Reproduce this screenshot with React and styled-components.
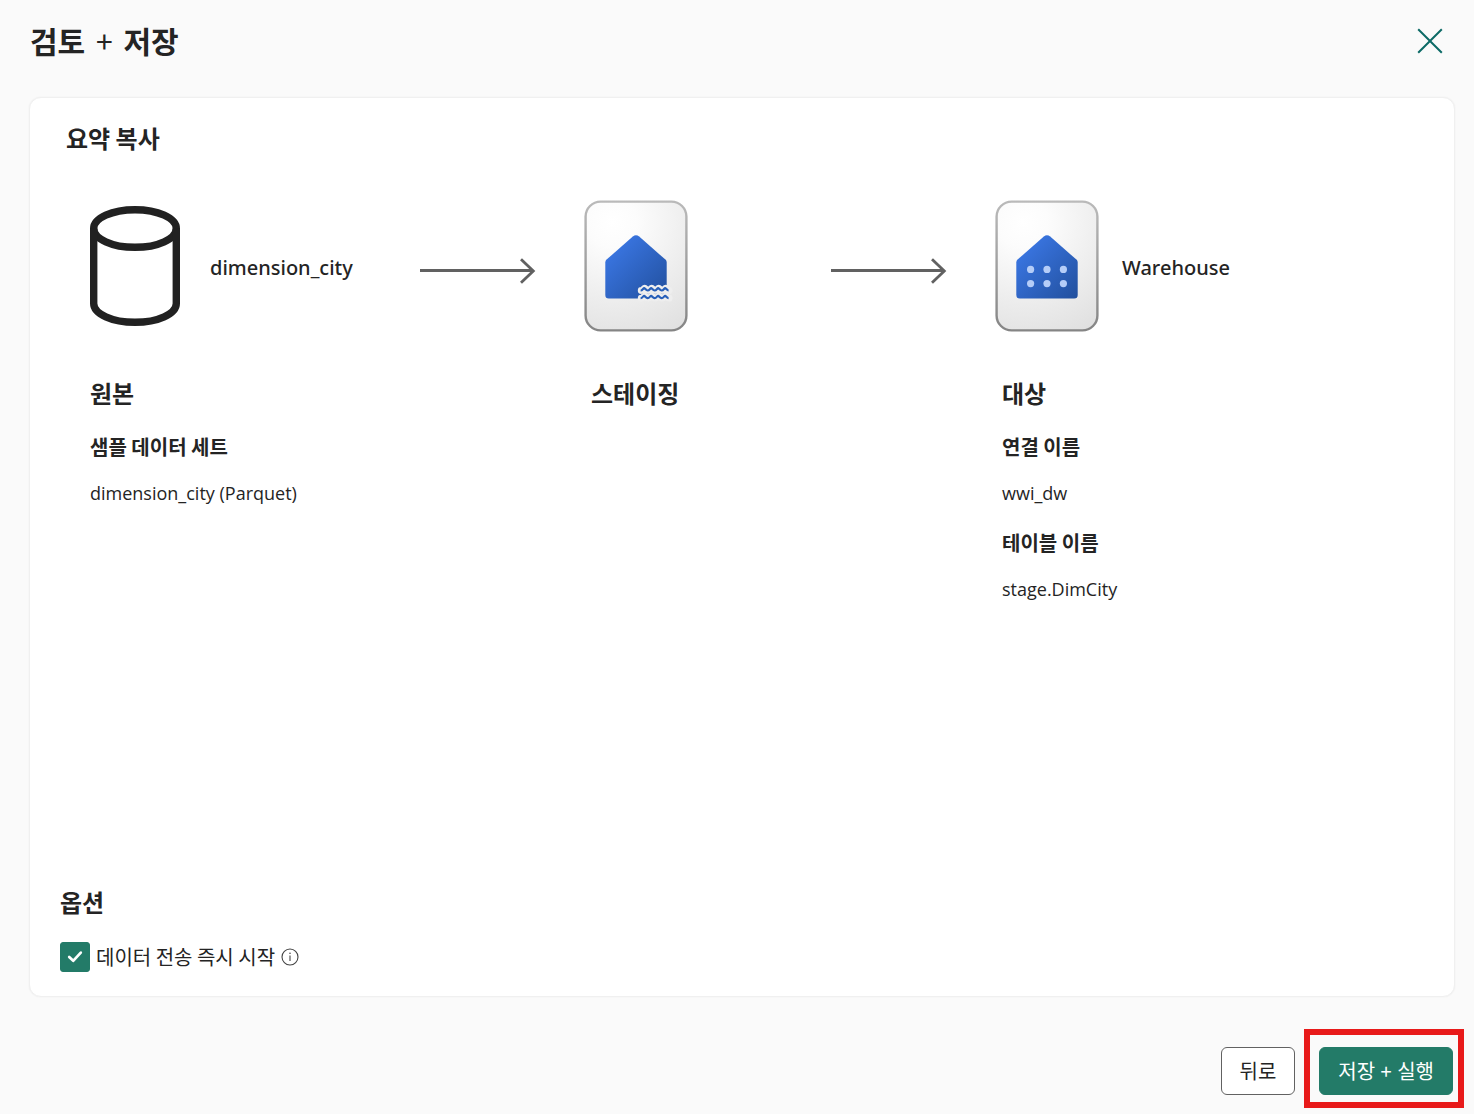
import React from "react";
import styled, { createGlobalStyle } from "styled-components";

const GlobalStyle = createGlobalStyle`
  *, *::before, *::after { box-sizing: border-box; }
  body {
    margin: 0;
    background: #fafafa;
    color: #242424;
    font-family: "Noto Sans CJK KR", "Noto Sans", sans-serif;
    font-size: 20px;
    line-height: 28px;
  }
  h1, h2, h3, p, dl, dt, dd { margin: 0; }
`;

const Dialog = styled.main`
  display: flex;
  flex-direction: column;
  min-height: 100vh;
  padding: 20px 19px 19px 29px;
`;

const Header = styled.header`
  display: flex;
  align-items: center;
  justify-content: space-between;
  height: 42px;
  padding: 0 12px 0 1px;
`;

const Title = styled.h1`
  padding-bottom: 2px;
  font-size: 30px;
  line-height: 40px;
  font-weight: 700;
`;

const Plus = styled.span`
  margin: 0 ${(p) => p.$space}px;
  font-weight: 400;
`;

const CloseButton = styled.button`
  display: flex;
  padding: 0;
  border: 0;
  background: none;
  color: #0c6a66;
  cursor: pointer;
`;

const Card = styled.section`
  display: flex;
  flex: 1;
  flex-direction: column;
  margin-top: 35px;
  padding: 24px 30px;
  border: 1px solid #f0f0f0;
  border-radius: 12px;
  background: #ffffff;
  box-shadow: 0 0 2px rgba(0, 0, 0, 0.06);
`;

const Heading = styled.h2`
  font-size: 24px;
  line-height: 32px;
  font-weight: 700;
`;

const SummaryHeading = styled(Heading)`
  padding-left: 6px;
`;

const Steps = styled.div`
  display: grid;
  grid-template-columns: 494fr 411fr 400fr;
  margin-top: 46px;
  padding: 0 29px 0 30px;
`;

const Step = styled.div`
  min-width: 0;
`;

const Flow = styled.div`
  display: flex;
  align-items: center;
  height: 132px;
`;

const ItemName = styled.span`
  margin-left: ${(p) => p.$gap}px;
  padding-top: 4px;
  font-family: "Noto Sans", "Open Sans", sans-serif;
  font-weight: 500;
`;

const ArrowSvg = styled.svg`
  flex: none;
  margin-left: auto;
  margin-right: 48px;
  margin-top: 10px;
`;

const Details = styled.div`
  margin-top: 45px;
  padding-left: ${(p) => p.$inset}px;
`;

const Fields = styled.dl`
  margin-top: 24px;
`;

const FieldName = styled.dt`
  font-weight: 700;
`;

const FieldValue = styled.dd`
  margin: 18px 0 22px;
  font-family: "Open Sans", "Noto Sans", sans-serif;
  font-size: 18px;
`;

const Options = styled.div`
  margin-top: auto;
`;

const OptionRow = styled.div`
  display: flex;
  align-items: center;
  margin-top: 24px;
`;

const CheckBox = styled.span`
  position: relative;
  display: flex;
  width: 30px;
  height: 30px;
  color: #ffffff;

  svg {
    position: absolute;
    inset: 0;
    pointer-events: none;
  }
`;

const CheckInput = styled.input`
  appearance: none;
  width: 30px;
  height: 30px;
  margin: 0;
  border: 1px solid #237b68;
  border-radius: 3px;
  background: #ffffff;

  &:checked { background: #237b68; }
`;

const OptionLabel = styled.label`
  margin: 0 6px;
`;

const Footer = styled.footer`
  display: flex;
  justify-content: flex-end;
  gap: 24px;
  margin-top: 50px;
  padding-right: 2px;
`;

const Button = styled.button`
  height: 48px;
  padding: 0 18px;
  border: 1px solid ${(p) => (p.$primary ? "#237b68" : "#616161")};
  border-radius: 6px;
  background: ${(p) => (p.$primary ? "#237b68" : "#ffffff")};
  color: ${(p) => (p.$primary ? "#ffffff" : "#242424")};
  font: inherit;
  cursor: pointer;
`;

const Highlighted = styled.div`
  position: relative;

  &::after {
    content: "";
    position: absolute;
    inset: -18px -11px -13px -15px;
    border: 6px solid #e81a1a;
    pointer-events: none;
  }
`;

function CloseIcon() {
  return (
    <svg width="26" height="26" viewBox="0 0 26 26" fill="none" stroke="currentColor" strokeWidth="2" aria-hidden="true">
      <path d="M1.2 1.2 24.8 24.8M24.8 1.2 1.2 24.8" />
    </svg>
  );
}

function DatabaseIcon() {
  return (
    <svg width="90" height="120" viewBox="0 0 90 120" fill="none" stroke="#212121" strokeWidth="7.4" aria-hidden="true">
      <ellipse cx="45" cy="22.5" rx="41.3" ry="18.8" />
      <path d="M3.7 22.5V97.5C3.7 107.9 22.2 116.3 45 116.3S86.3 107.9 86.3 97.5V22.5" />
    </svg>
  );
}

function Arrow() {
  return (
    <ArrowSvg width="116" height="26" viewBox="0 0 116 26" fill="none" stroke="#616161" strokeWidth="2.8" aria-hidden="true">
      <path d="M0 12.5H113M101 1.2 113.3 13 101 24.8" />
    </ArrowSvg>
  );
}

const waveCrests = "c1.8 0 2.7-2.4 3.5-2.4s2 2.4 3.5 2.4".repeat(4);

function Tile({ kind }) {
  const id = (name) => `${kind}-${name}`;
  return (
    <svg width="104" height="132" viewBox="0 0 104 132" aria-hidden="true">
      <defs>
        <radialGradient id={id("face")} gradientUnits="userSpaceOnUse" cx="28" cy="22" r="125">
          <stop offset="0" stopColor="#ffffff" />
          <stop offset="0.2" stopColor="#fcfcfc" />
          <stop offset="1" stopColor="#e0e0e0" />
        </radialGradient>
        <linearGradient id={id("edge")} x1="0" y1="0" x2="0" y2="1">
          <stop offset="0" stopColor="#bababa" />
          <stop offset="1" stopColor="#858585" />
        </linearGradient>
        <linearGradient id={id("house")} gradientUnits="userSpaceOnUse" x1="28" y1="46" x2="82" y2="98">
          <stop offset="0" stopColor="#3a76e3" />
          <stop offset="1" stopColor="#22509e" />
        </linearGradient>
      </defs>
      <rect x="1.6" y="1.6" width="100.8" height="128.8" rx="15" fill={`url(#${id("face")})`} stroke={`url(#${id("edge")})`} strokeWidth="2.4" />
      <path
        d="M48.8 36.6Q52 33.8 55.2 36.6L81.4 59.6Q82.7 60.8 82.7 62.5V95Q82.7 98.6 79.2 98.6H24.8Q21.3 98.6 21.3 95V62.5Q21.3 60.8 22.6 59.6Z"
        fill={`url(#${id("house")})`}
      />
      {kind === "lakehouse" ? (
        <g fill="none" strokeLinejoin="round">
          <g stroke="#eeeeee" strokeWidth="6.8" strokeLinecap="round">
            <path d={`M57.2 90.5${waveCrests}`} />
            <path d={`M57.2 98.2${waveCrests}`} />
          </g>
          <g stroke="#2860b9" strokeWidth="2.2">
            <path d={`M56.6 90.5${waveCrests}`} />
            <path d={`M56.6 98.2${waveCrests}`} />
          </g>
        </g>
      ) : (
        <g fill="#b5cdf8">
          {[69.4, 83.6].map((y) => [35.6, 52, 68.4].map((x) => <circle key={`${x}-${y}`} cx={x} cy={y} r="3.6" />))}
        </g>
      )}
    </svg>
  );
}

function CheckIcon() {
  return (
    <svg width="30" height="30" viewBox="0 0 30 30" fill="none" stroke="currentColor" strokeWidth="2.7" strokeLinecap="round" strokeLinejoin="round" aria-hidden="true">
      <path d="M9.2 15 13.2 18.8 20.8 10.6" />
    </svg>
  );
}

function InfoIcon() {
  return (
    <svg width="18" height="18" viewBox="0 0 18 18" fill="none" stroke="#424242" strokeWidth="1.1" aria-hidden="true">
      <circle cx="9" cy="9" r="8" />
      <path d="M9 7.6V13" />
      <circle cx="9" cy="5.2" r="0.8" fill="#424242" stroke="none" />
    </svg>
  );
}

export default function App() {
  return (
    <>
      <GlobalStyle />
      <Dialog>
        <Header>
          <Title>
            검토 <Plus $space={4}>+</Plus> 저장
          </Title>
          <CloseButton type="button" aria-label="닫기">
            <CloseIcon />
          </CloseButton>
        </Header>

        <Card>
          <SummaryHeading>요약 복사</SummaryHeading>
          <Steps>
            <Step>
              <Flow>
                <DatabaseIcon />
                <ItemName $gap={30}>dimension_city</ItemName>
                <Arrow />
              </Flow>
              <Details $inset={0}>
                <Heading>원본</Heading>
                <Fields>
                  <FieldName>샘플 데이터 세트</FieldName>
                  <FieldValue>dimension_city (Parquet)</FieldValue>
                </Fields>
              </Details>
            </Step>
            <Step>
              <Flow>
                <Tile kind="lakehouse" />
                <Arrow />
              </Flow>
              <Details $inset={7}>
                <Heading>스테이징</Heading>
              </Details>
            </Step>
            <Step>
              <Flow>
                <Tile kind="warehouse" />
                <ItemName $gap={23}>Warehouse</ItemName>
              </Flow>
              <Details $inset={7}>
                <Heading>대상</Heading>
                <Fields>
                  <FieldName>연결 이름</FieldName>
                  <FieldValue>wwi_dw</FieldValue>
                  <FieldName>테이블 이름</FieldName>
                  <FieldValue>stage.DimCity</FieldValue>
                </Fields>
              </Details>
            </Step>
          </Steps>

          <Options>
            <Heading>옵션</Heading>
            <OptionRow>
              <CheckBox>
                <CheckInput id="start-now" type="checkbox" defaultChecked />
                <CheckIcon />
              </CheckBox>
              <OptionLabel htmlFor="start-now">데이터 전송 즉시 시작</OptionLabel>
              <InfoIcon />
            </OptionRow>
          </Options>
        </Card>

        <Footer>
          <Button type="button">뒤로</Button>
          <Highlighted>
            <Button type="button" $primary>
              저장 <Plus $space={1}>+</Plus> 실행
            </Button>
          </Highlighted>
        </Footer>
      </Dialog>
    </>
  );
}
